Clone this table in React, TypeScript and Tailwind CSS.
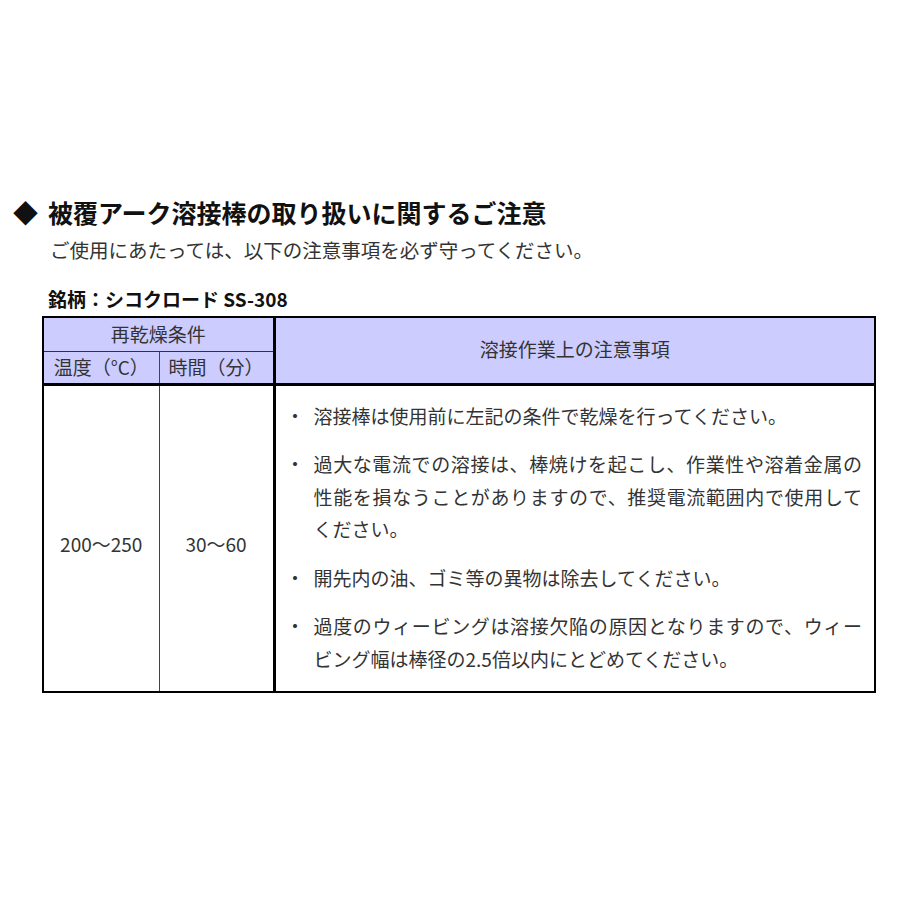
const notes = [
  "溶接棒は使用前に左記の条件で乾燥を行ってください。",
  "過大な電流での溶接は、棒焼けを起こし、作業性や溶着金属の性能を損なうことがありますので、推奨電流範囲内で使用してください。",
  "開先内の油、ゴミ等の異物は除去してください。",
  "過度のウィービングは溶接欠陥の原因となりますので、ウィービング幅は棒径の2.5倍以内にとどめてください。",
];

export default function App() {
  return (
    <div className="w-[920px] h-[920px] bg-white font-['Noto_Sans_CJK_JP',sans-serif] text-[#333]">
      <div className="pt-[195px]">
        <h1 className="flex items-center pl-[13px] text-[25px] font-bold leading-[34px] text-[#111]">
          <span>◆</span>
          <span className="ml-[10px]">被覆アーク溶接棒の取り扱いに関するご注意</span>
        </h1>
        <p className="mt-[6px] pl-[50px] text-[19.5px] leading-[30px]">
          ご使用にあたっては、以下の注意事項を必ず守ってください。
        </p>
        <p className="mt-[20px] pl-[48px] text-[19px] font-bold leading-[28px] text-[#111]">
          銘柄：シコクロード SS-308
        </p>

        <table className="ml-[42px] mt-[3px] w-[834px] table-fixed border-collapse border-2 border-black text-[19px]">
          <colgroup>
            <col className="w-[116px]" />
            <col className="w-[115px]" />
            <col />
          </colgroup>
          <thead>
            <tr className="h-[34px] bg-[#ccccff]">
              <th colSpan={2} className="border-b border-r-[3px] border-black border-b-[#333] font-normal leading-[32px]">
                再乾燥条件
              </th>
              <th rowSpan={2} className="border-b-[3px] border-black pb-[3px] font-normal">
                溶接作業上の注意事項
              </th>
            </tr>
            <tr className="h-[33px] bg-[#ccccff]">
              <th className="border-r border-b-[3px] border-black border-r-[#444] font-normal leading-[30px]">温度（°C）</th>
              <th className="border-r-[3px] border-b-[3px] border-black font-normal leading-[30px]">時間（分）</th>
            </tr>
          </thead>
          <tbody>
            <tr>
              <td className="border-r border-[#444] pt-[12px] text-center align-middle">200～250</td>
              <td className="border-r-[3px] border-black pt-[12px] text-center align-middle">30～60</td>
              <td className="pt-[14px] pb-[16px] pl-[10px] pr-[12px]">
                <ul className="flex flex-col gap-[16px]">
                  {notes.map((n) => (
                    <li key={n} className="flex leading-[32.5px]">
                      <span className="w-[19px] shrink-0">・</span>
                      <span className="ml-[9px] flex-1 text-justify">{n}</span>
                    </li>
                  ))}
                </ul>
              </td>
            </tr>
          </tbody>
        </table>
      </div>
    </div>
  );
}
